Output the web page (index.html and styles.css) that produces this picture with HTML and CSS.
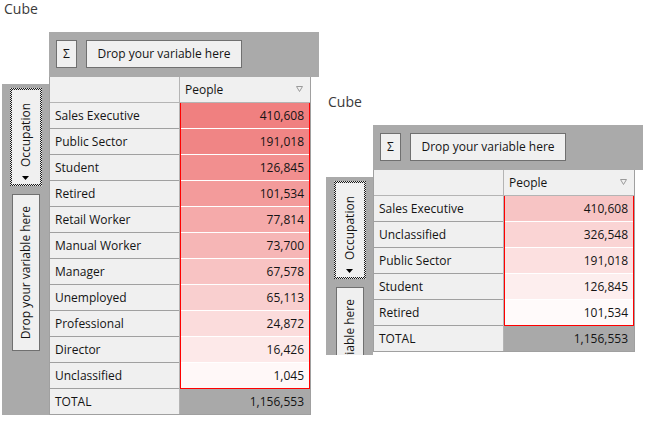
FILE: index.html
```html
<!DOCTYPE html>
<html>
<head>
<meta charset="utf-8">
<link rel="stylesheet" href="styles.css">
</head>
<body>
<div class="page">
  <section class="cube cube--tall">
    <div class="cube-title">Cube</div>
    <div class="pivot">
      <div class="corner"></div>
      <div class="col-zone">
        <button class="btn btn-sigma">Σ</button>
        <button class="btn btn-drop">Drop your variable here</button>
      </div>
      <div class="row-zone">
        <div class="vbtn vbtn-focus">
          <span class="vlabel">Occupation</span>
          <svg class="vtri" width="7" height="4" viewBox="0 0 7 4"><polygon points="0,0 7,0 3.5,4" fill="#000"/></svg>
        </div>
        <div class="vbtn vbtn-drop"><span class="vlabel">Drop your variable here</span></div>
      </div>
      <div class="grid">
        <div class="hd hd-blank"></div>
        <div class="hd hd-measure">People
          <svg class="filter" width="7" height="6" viewBox="0 0 7 6"><polygon points="0.5,0.5 6.5,0.5 3.5,5.5" fill="none" stroke="#9a9a9a" stroke-width="1"/></svg>
        </div>
        <div class="labels">
          <div class="lbl">Sales Executive</div>
          <div class="lbl">Public Sector</div>
          <div class="lbl">Student</div>
          <div class="lbl">Retired</div>
          <div class="lbl">Retail Worker</div>
          <div class="lbl">Manual Worker</div>
          <div class="lbl">Manager</div>
          <div class="lbl">Unemployed</div>
          <div class="lbl">Professional</div>
          <div class="lbl">Director</div>
          <div class="lbl">Unclassified</div>
        </div>
        <div class="values">
          <div class="val" style="background:#f08080">410,608</div>
          <div class="val" style="background:#f08585">191,018</div>
          <div class="val" style="background:#f28f8f">126,845</div>
          <div class="val" style="background:#f39b9b">101,534</div>
          <div class="val" style="background:#f5aaaa">77,814</div>
          <div class="val" style="background:#f6b6b6">73,700</div>
          <div class="val" style="background:#f8c3c3">67,578</div>
          <div class="val" style="background:#f9cfcf">65,113</div>
          <div class="val" style="background:#fbdcdc">24,872</div>
          <div class="val" style="background:#fde9e9">16,426</div>
          <div class="val" style="background:#fff8f8">1,045</div>
        </div>
        <div class="tot-lbl">TOTAL</div>
        <div class="tot-val">1,156,553</div>
      </div>
    </div>
  </section>

  <section class="cube cube--short">
    <div class="cube-title">Cube</div>
    <div class="pivot">
      <div class="corner"></div>
      <div class="col-zone">
        <button class="btn btn-sigma">Σ</button>
        <button class="btn btn-drop">Drop your variable here</button>
      </div>
      <div class="row-zone">
        <div class="vbtn vbtn-focus">
          <span class="vlabel">Occupation</span>
          <svg class="vtri" width="7" height="4" viewBox="0 0 7 4"><polygon points="0,0 7,0 3.5,4" fill="#000"/></svg>
        </div>
        <div class="vbtn vbtn-drop"><span class="vlabel">Drop your variable here</span></div>
      </div>
      <div class="grid">
        <div class="hd hd-blank"></div>
        <div class="hd hd-measure">People
          <svg class="filter" width="7" height="6" viewBox="0 0 7 6"><polygon points="0.5,0.5 6.5,0.5 3.5,5.5" fill="none" stroke="#9a9a9a" stroke-width="1"/></svg>
        </div>
        <div class="labels">
          <div class="lbl">Sales Executive</div>
          <div class="lbl">Unclassified</div>
          <div class="lbl">Public Sector</div>
          <div class="lbl">Student</div>
          <div class="lbl">Retired</div>
        </div>
        <div class="values">
          <div class="val" style="background:#f7c4c4">410,608</div>
          <div class="val" style="background:#fad4d4">326,548</div>
          <div class="val" style="background:#fce0e0">191,018</div>
          <div class="val" style="background:#fdeeee">126,845</div>
          <div class="val" style="background:#fffafa">101,534</div>
        </div>
        <div class="tot-lbl">TOTAL</div>
        <div class="tot-val">1,156,553</div>
      </div>
    </div>
  </section>
</div>
</body>
</html>
```

FILE: styles.css
```css
html, body {
  margin: 0;
  padding: 0;
  background: #ffffff;
  overflow: hidden;
}

body {
  font-family: "Open Sans", "Noto Sans", sans-serif;
  font-size: 12px;
  color: #141414;
}

.page {
  display: flex;
  align-items: flex-start;
  gap: 7px;
  padding-left: 2px;
}

.cube--short {
  margin-top: 93px;
}

.cube-title {
  font-size: 14px;
  line-height: 18px;
  color: #3a3a3a;
  padding-left: 2px;
  margin-bottom: 14px;
}

.pivot {
  display: grid;
  grid-template-columns: 47px 270px;
  grid-template-rows: 45px auto;
}

.col-zone {
  background: #aaaaaa;
  display: flex;
  align-items: flex-start;
  gap: 9px;
  padding: 8px 7px 0;
}

.btn {
  font-family: inherit;
  font-size: 12px;
  color: #141414;
  background: #f0f0f0;
  border: 1px solid #707070;
  height: 28px;
  padding: 0;
  margin: 0;
  line-height: 26px;
}

.btn-sigma {
  width: 21px;
}

.btn-drop {
  width: 156px;
}

.row-zone {
  align-self: start;
  box-sizing: border-box;
  height: calc(100% - 4px);
  background: #aaaaaa;
  margin-top: 7px;
  display: flex;
  flex-direction: column;
  align-items: center;
  gap: 8px;
  padding-top: 4px;
  overflow: hidden;
  contain: size;
}

.cube--tall .row-zone {
  height: calc(100% + 20px);
}

.vbtn {
  flex: none;
  display: flex;
  flex-direction: column;
  align-items: center;
  box-sizing: border-box;
}

.vlabel {
  writing-mode: vertical-rl;
  transform: rotate(180deg);
  line-height: 16px;
  white-space: nowrap;
}

.vbtn-focus {
  width: 32px;
  height: 98px;
  justify-content: flex-end;
  border: 2px solid transparent;
  background:
    linear-gradient(#f0f0f0, #f0f0f0) padding-box,
    repeating-conic-gradient(#1a1a1a 0 25%, #e8e8e8 0 50%) 0 0 / 2px 2px border-box;
  padding-bottom: 4px;
}

.vtri {
  display: block;
  margin-top: 9px;
}

.vbtn-drop {
  width: 28px;
  height: 157px;
  justify-content: center;
  background: #f0f0f0;
  border: 1px solid #707070;
}

.grid {
  justify-self: start;
  align-self: start;
  display: grid;
  grid-template-columns: 130px 130px;
  border-left: 1px solid #a0a0a0;
  border-right: 1px solid #a0a0a0;
  border-bottom: 1px solid #a0a0a0;
  background: #ffffff;
}

.hd {
  height: 25px;
  line-height: 25px;
  background: #f0f0f0;
  border-bottom: 1px solid #b4b4b4;
}

.hd-blank {
  border-right: 1px solid #b4b4b4;
}

.hd-measure {
  position: relative;
  padding-left: 5px;
}

.filter {
  position: absolute;
  right: 7px;
  top: 9px;
}

.labels {
  background: #f0f0f0;
  border-right: 1px solid #b4b4b4;
}

.lbl {
  height: 25px;
  line-height: 25px;
  padding-left: 5px;
  border-bottom: 1px solid #a0a0a0;
  white-space: nowrap;
}

.values {
  border: 1px solid #ff0000;
  margin-top: -1px;
  background: #ffffff;
  display: flex;
  flex-direction: column;
  gap: 1px;
}

.val {
  height: 25px;
  line-height: 25px;
  text-align: right;
  padding-right: 5px;
}

.tot-lbl {
  height: 25px;
  line-height: 25px;
  padding-left: 5px;
  background: #f0f0f0;
  border-right: 1px solid #b4b4b4;
}

.tot-val {
  height: 25px;
  line-height: 25px;
  text-align: right;
  padding-right: 6px;
  background: #a9a9a9;
}
```
